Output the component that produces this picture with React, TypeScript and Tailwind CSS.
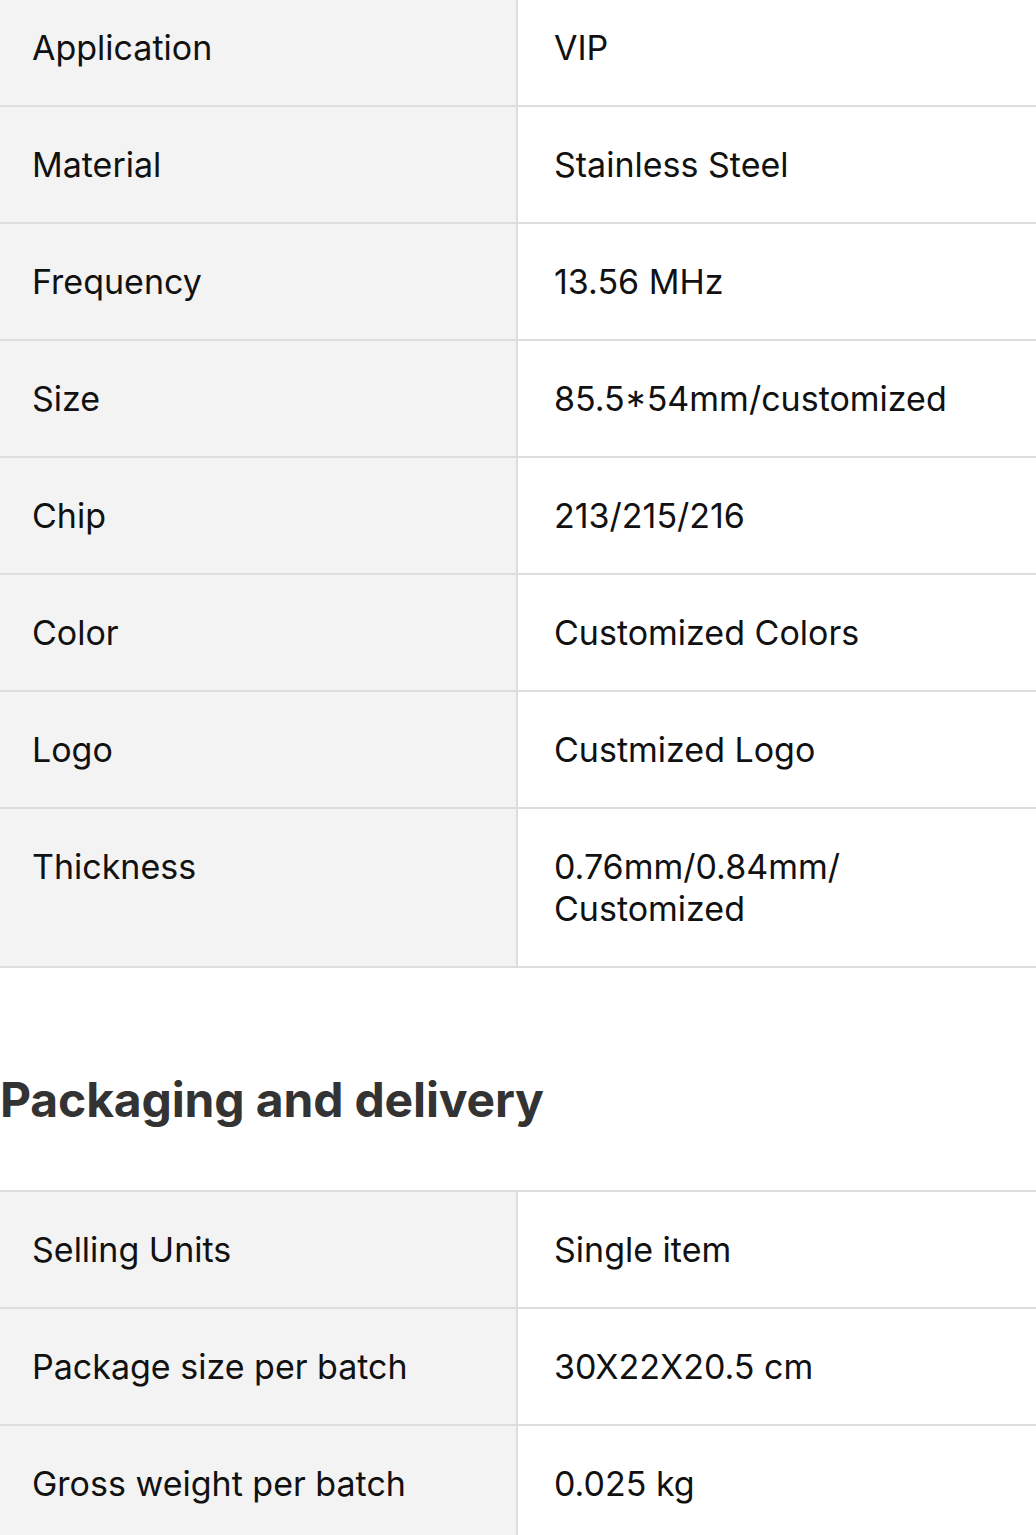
import React from "react";

const specs: [string, string][] = [
  ["Application", "VIP"],
  ["Material", "Stainless Steel"],
  ["Frequency", "13.56 MHz"],
  ["Size", "85.5*54mm/customized"],
  ["Chip", "213/215/216"],
  ["Color", "Customized Colors"],
  ["Logo", "Custmized Logo"],
  ["Thickness", "0.76mm/0.84mm/ Customized"],
];

const packaging: [string, string][] = [
  ["Selling Units", "Single item"],
  ["Package size per batch", "30X22X20.5 cm"],
  ["Gross weight per batch", "0.025 kg"],
];

function Table({ rows, topBorder }: { rows: [string, string][]; topBorder: boolean }) {
  return (
    <div className={topBorder ? "border-t-2 border-[#dddddd]" : ""}>
      {rows.map(([k, v]) => (
        <div key={k} className="grid grid-cols-[518px_1fr] border-b-2 border-[#dddddd]">
          <div className="bg-[#f3f3f3] border-r-2 border-[#dddddd] pl-[32px] pr-6 pt-[37px] pb-[36px] text-[34px] leading-[42px] text-[#111111]">
            {k}
          </div>
          <div className="pl-[36px] pr-[60px] pt-[37px] pb-[36px] text-[34px] leading-[42px] text-[#111111]">
            {v}
          </div>
        </div>
      ))}
    </div>
  );
}

export default function App() {
  return (
    <div
      className="w-[1036px] h-[1535px] overflow-hidden bg-white"
      style={{ fontFamily: "Inter, 'Noto Sans', sans-serif" }}
    >
      <div className="-mt-[10px]">
        <Table rows={specs} topBorder={false} />
        <h2 className="mt-[103px] mb-[61px] text-[48px] leading-[58px] font-bold text-[#333333] tracking-[-0.15px]">
          Packaging and delivery
        </h2>
        <Table rows={packaging} topBorder={true} />
      </div>
    </div>
  );
}
